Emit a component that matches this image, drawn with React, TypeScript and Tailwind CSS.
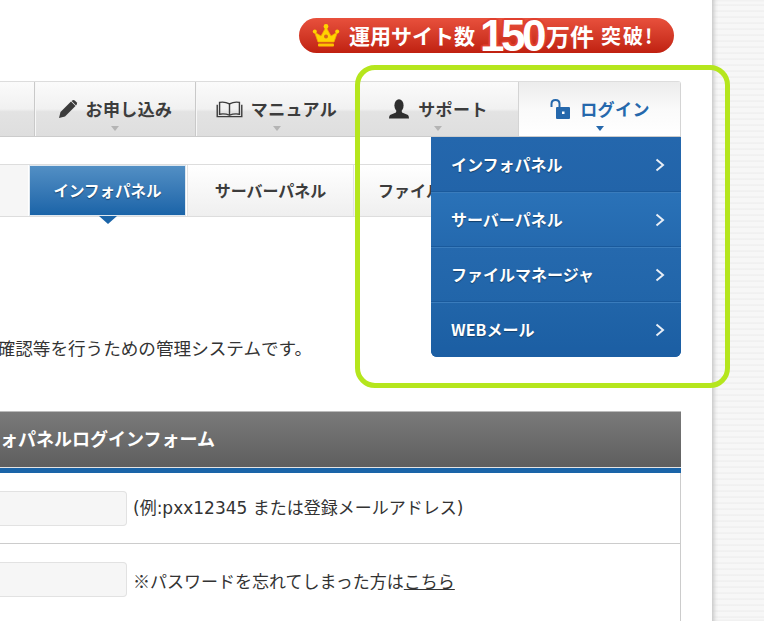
const bodyFont = "font-['DejaVu_Sans','Noto_Sans_CJK_JP',sans-serif]";
const jpFont = "font-['Noto_Sans_CJK_JP',sans-serif]";

const Crown = () => (
  <svg width="28" height="26" viewBox="0 0 28 26" className="shrink-0">
    <path d="M6 19 L2.5 9 L9 13 L14 4 L19 13 L25.5 9 L22 19 Z" fill="#ffd400" stroke="#f5a800" strokeWidth="0.8" />
    <circle cx="14" cy="3.5" r="2.4" fill="#ffd400" />
    <circle cx="2.8" cy="8.5" r="2" fill="#ffd400" />
    <circle cx="25.2" cy="8.5" r="2" fill="#ffd400" />
    <circle cx="14" cy="13.5" r="2" fill="#d9651a" />
    <rect x="6" y="20.5" width="16" height="3" rx="1" fill="#ffc400" />
  </svg>
);

const Pencil = () => (
  <svg width="20" height="20" viewBox="0 0 20 20">
    <path d="M1 19 L2.5 13 L13 2.5 L17.5 7 L7 17.5 Z" fill="#3c3c3c" />
    <path d="M14.2 1.5 Q15.5 0.5 16.8 1.5 L18.6 3.3 Q19.5 4.6 18.6 5.8 L18 6.4 L13.6 2 Z" fill="#3c3c3c" />
  </svg>
);

const Book = () => (
  <svg width="27" height="17" viewBox="0 0 28 18" fill="none" stroke="#3c3c3c">
    <path d="M14 3 Q9 0.5 3.5 1.5 V14 Q9 13 14 15 Q19 13 24.5 14 V1.5 Q19 0.5 14 3 Z" strokeWidth="1.5" />
    <path d="M14 3 V15" strokeWidth="1.5" />
    <path d="M1 4 V16.5 H27 V4" strokeWidth="1.5" />
  </svg>
);

const Person = () => (
  <svg width="22" height="20" viewBox="0 0 22 20" fill="#2e2e2e">
    <ellipse cx="11" cy="6.5" rx="4.6" ry="6.2" />
    <path d="M8.5 11 H13.5 L14 13.5 L20 16 Q21 17 21 19.5 H1 Q1 17 2 16 L8 13.5 Z" />
  </svg>
);

const Unlock = () => (
  <svg width="22" height="22" viewBox="0 0 22 22">
    <path d="M2.5 9 V6 Q2.5 2 6.5 2 Q10.5 2 10.5 6 V9" fill="none" stroke="#2568ac" strokeWidth="2" />
    <rect x="7" y="9" width="14" height="12" rx="1" fill="#2568ac" />
    <rect x="13" y="13.5" width="2.5" height="2.5" fill="#fff" />
  </svg>
);

const Chevron = () => (
  <svg width="10" height="14" viewBox="0 0 10 14" fill="none" stroke="#e8eef6" strokeWidth="2">
    <path d="M1.5 1.5 L8 7 L1.5 12.5" />
  </svg>
);

const Caret = ({ color }: { color: string }) => (
  <span className={`absolute bottom-[5px] left-1/2 -ml-[4px] h-0 w-0 border-x-[4px] border-t-[5px] border-x-transparent ${color}`} />
);

const NavCell = ({ width, icon, label, caret = true }: { width: string; icon: React.ReactNode; label: string; caret?: boolean }) => (
  <div className={`relative flex h-full items-center justify-center gap-2 border-l border-[#c9c9c9] shadow-[inset_1px_0_0_#f7f7f7] ${width}`}>
    {icon}
    <span className="text-[17px] font-bold tracking-[0.4px] text-[#3c3c3c]">{label}</span>
    {caret && <Caret color="border-t-[#b4b4b4]" />}
  </div>
);

const menuItems = [
  { label: "インフォパネル", bg: "bg-gradient-to-b from-[#2467ad] to-[#2264a9]" },
  { label: "サーバーパネル", bg: "bg-gradient-to-b from-[#2a72b8] to-[#2469ae]" },
  { label: "ファイルマネージャ", bg: "bg-gradient-to-b from-[#2569ae] to-[#2165a9]" },
  { label: "WEBメール", bg: "bg-gradient-to-b from-[#2165a9] to-[#1b5ea3]" },
];

export default function App() {
  return (
    <div className={`relative flex h-[621px] w-[764px] overflow-hidden bg-white ${jpFont}`}>
      <div className="w-[712px] shrink-0">
        {/* banner */}
        <div className="flex justify-end pr-[38px] pt-[18px]">
          <div className="flex h-[35px] w-[375px] items-center rounded-full bg-gradient-to-b from-[#e8503c] to-[#c0200f] pl-[13px] font-bold text-white">
            <Crown />
            <span className="ml-[9px] text-[21px] leading-none">運用サイト数</span>
            <span className="ml-[5px] font-['Liberation_Sans',sans-serif] text-[44px] leading-none tracking-[-3.5px] [text-shadow:0_-2px_0_#e0402f,2px_-1px_0_#e0402f,-2px_-1px_0_#e0402f]">150</span>
            <span className="ml-[3px] text-[24px] leading-none">万件</span>
            <span className="ml-[7px] text-[20px] leading-none tracking-[2px]">突破!</span>
          </div>
        </div>

        {/* global nav */}
        <div className="mt-[28px] flex h-[56px] w-[681px] overflow-hidden rounded-tr-[3px] border-y border-t-[#dddddd] border-b-[#cccccc] bg-[linear-gradient(to_bottom,#fbfbfb_0%,#f1f1f1_50%,#e3e3e3_55%,#dedede_100%)]">
          <div className="w-[34px] shrink-0" />
          <NavCell width="w-[161px]" icon={<Pencil />} label="お申し込み" />
          <NavCell width="w-[162px]" icon={<Book />} label="マニュアル" />
          <NavCell width="w-[161px]" icon={<Person />} label="サポート" />
          <div className="relative flex h-full w-[163px] items-center justify-center gap-[9px] border-x border-[#d4d4d4] bg-gradient-to-b from-[#ececec] via-[#fafafa] to-white">
            <Unlock />
            <span className="text-[17px] font-bold tracking-[0.4px] text-[#2568ac]">ログイン</span>
            <Caret color="border-t-[#2568ac]" />
          </div>
        </div>

        {/* panel tabs */}
        <div className="mt-[27px] flex h-[53px] w-[681px] border-y border-[#dddddd]">
          <div className="h-full w-[28px] bg-[#f6f6f6]" />
          <div className="relative ml-[1px] mr-[1px] flex h-full w-[157px] items-center justify-center border border-[#dfe8f0] bg-gradient-to-b from-[#528fc4] to-[#1a64a8]">
            <span className="text-[15.5px] font-bold text-white [text-shadow:0_1px_1px_#123f6b]">インフォパネル</span>
            <span className="absolute -bottom-[9px] left-1/2 -ml-[9px] h-0 w-0 border-x-[9px] border-t-[8px] border-x-transparent border-t-[#1a64a8]" />
          </div>
          <div className="flex h-full w-[167px] items-center justify-center border-x border-[#e2e2e2] bg-gradient-to-b from-white to-[#efefef] pb-[2px]">
            <span className="text-[16px] font-bold text-[#3c3c3c]">サーバーパネル</span>
          </div>
          <div className="flex h-full flex-1 items-center bg-gradient-to-b from-white to-[#efefef] pb-[2px] pl-[24px]">
            <span className="text-[16px] font-bold text-[#3c3c3c]">ファイル</span>
          </div>
        </div>

        {/* intro */}
        <div className="mt-[119px] flex h-[24px] w-[312px] items-center justify-end overflow-hidden whitespace-nowrap text-[17.6px] text-[#333333]">
          <span className="shrink-0">確認等を行うための管理システムです。</span>
        </div>

        {/* login form */}
        <div className="mt-[51px] w-[681px]">
          <div className="flex h-[57px] items-center border-y border-t-[#bbbbbb] border-b-[#e4e4e4] bg-gradient-to-b from-[#7a7a7a] to-[#5e5e5e] pb-[2px]">
            <div className="flex w-[215px] shrink-0 justify-end overflow-hidden whitespace-nowrap">
              <span className="shrink-0 text-[18px] font-bold text-white">ォパネルログインフォーム</span>
            </div>
          </div>
          <div className="h-[5px] bg-[#1a64a8]" />
          <div className="border-r border-[#cccccc]">
            <div className="flex h-[71px] items-center border-b border-[#cccccc]">
              <div className="h-[35px] w-[127px] rounded-r-[4px] border border-l-0 border-[#e2e2e2] bg-[#f6f6f6]" />
              <span className={`ml-[6px] pt-[2px] text-[17px] text-[#333333] ${bodyFont}`}>(例:pxx12345 または登録メールアドレス)</span>
            </div>
            <div className="flex items-center pt-[18px]">
              <div className="h-[35px] w-[127px] rounded-r-[4px] border border-l-0 border-[#e2e2e2] bg-[#f6f6f6]" />
              <span className="ml-[6px] pt-[2px] text-[17px] text-[#333333]">
                ※パスワードを忘れてしまった方は<span className="underline">こちら</span>
              </span>
            </div>
            <div className="h-[30px]" />
          </div>
        </div>
      </div>

      {/* striped side gutter */}
      <div className="flex-1 bg-[repeating-linear-gradient(to_bottom,#f7f7f7_0px,#f7f7f7_4px,#ededed_5px,#f4f4f4_6px)] shadow-[inset_4px_0_4px_-2px_#c4c4c4]" />

      {/* login dropdown */}
      <div className="absolute left-[431px] top-[137px] w-[250px] overflow-hidden rounded-b-[6px] bg-[#1b5ea3]">
        {menuItems.map((item, i) => (
          <div
            key={item.label}
            className={`flex h-[55px] items-center justify-between pl-[20px] pr-[16px] text-[16px] font-bold text-white ${item.bg} ${i > 0 ? "shadow-[inset_0_1px_0_#3a7cbc,0_-1px_0_#1a5a9c]" : ""}`}
          >
            <span className="pb-[2px] [text-shadow:0_1px_1px_#123f6b]">{item.label}</span>
            <Chevron />
          </div>
        ))}
      </div>

      {/* highlight frame */}
      <div className="pointer-events-none absolute left-[355px] top-[65px] h-[323px] w-[375px] rounded-[20px] border-[5px] border-[#b5e61d]" />
    </div>
  );
}
